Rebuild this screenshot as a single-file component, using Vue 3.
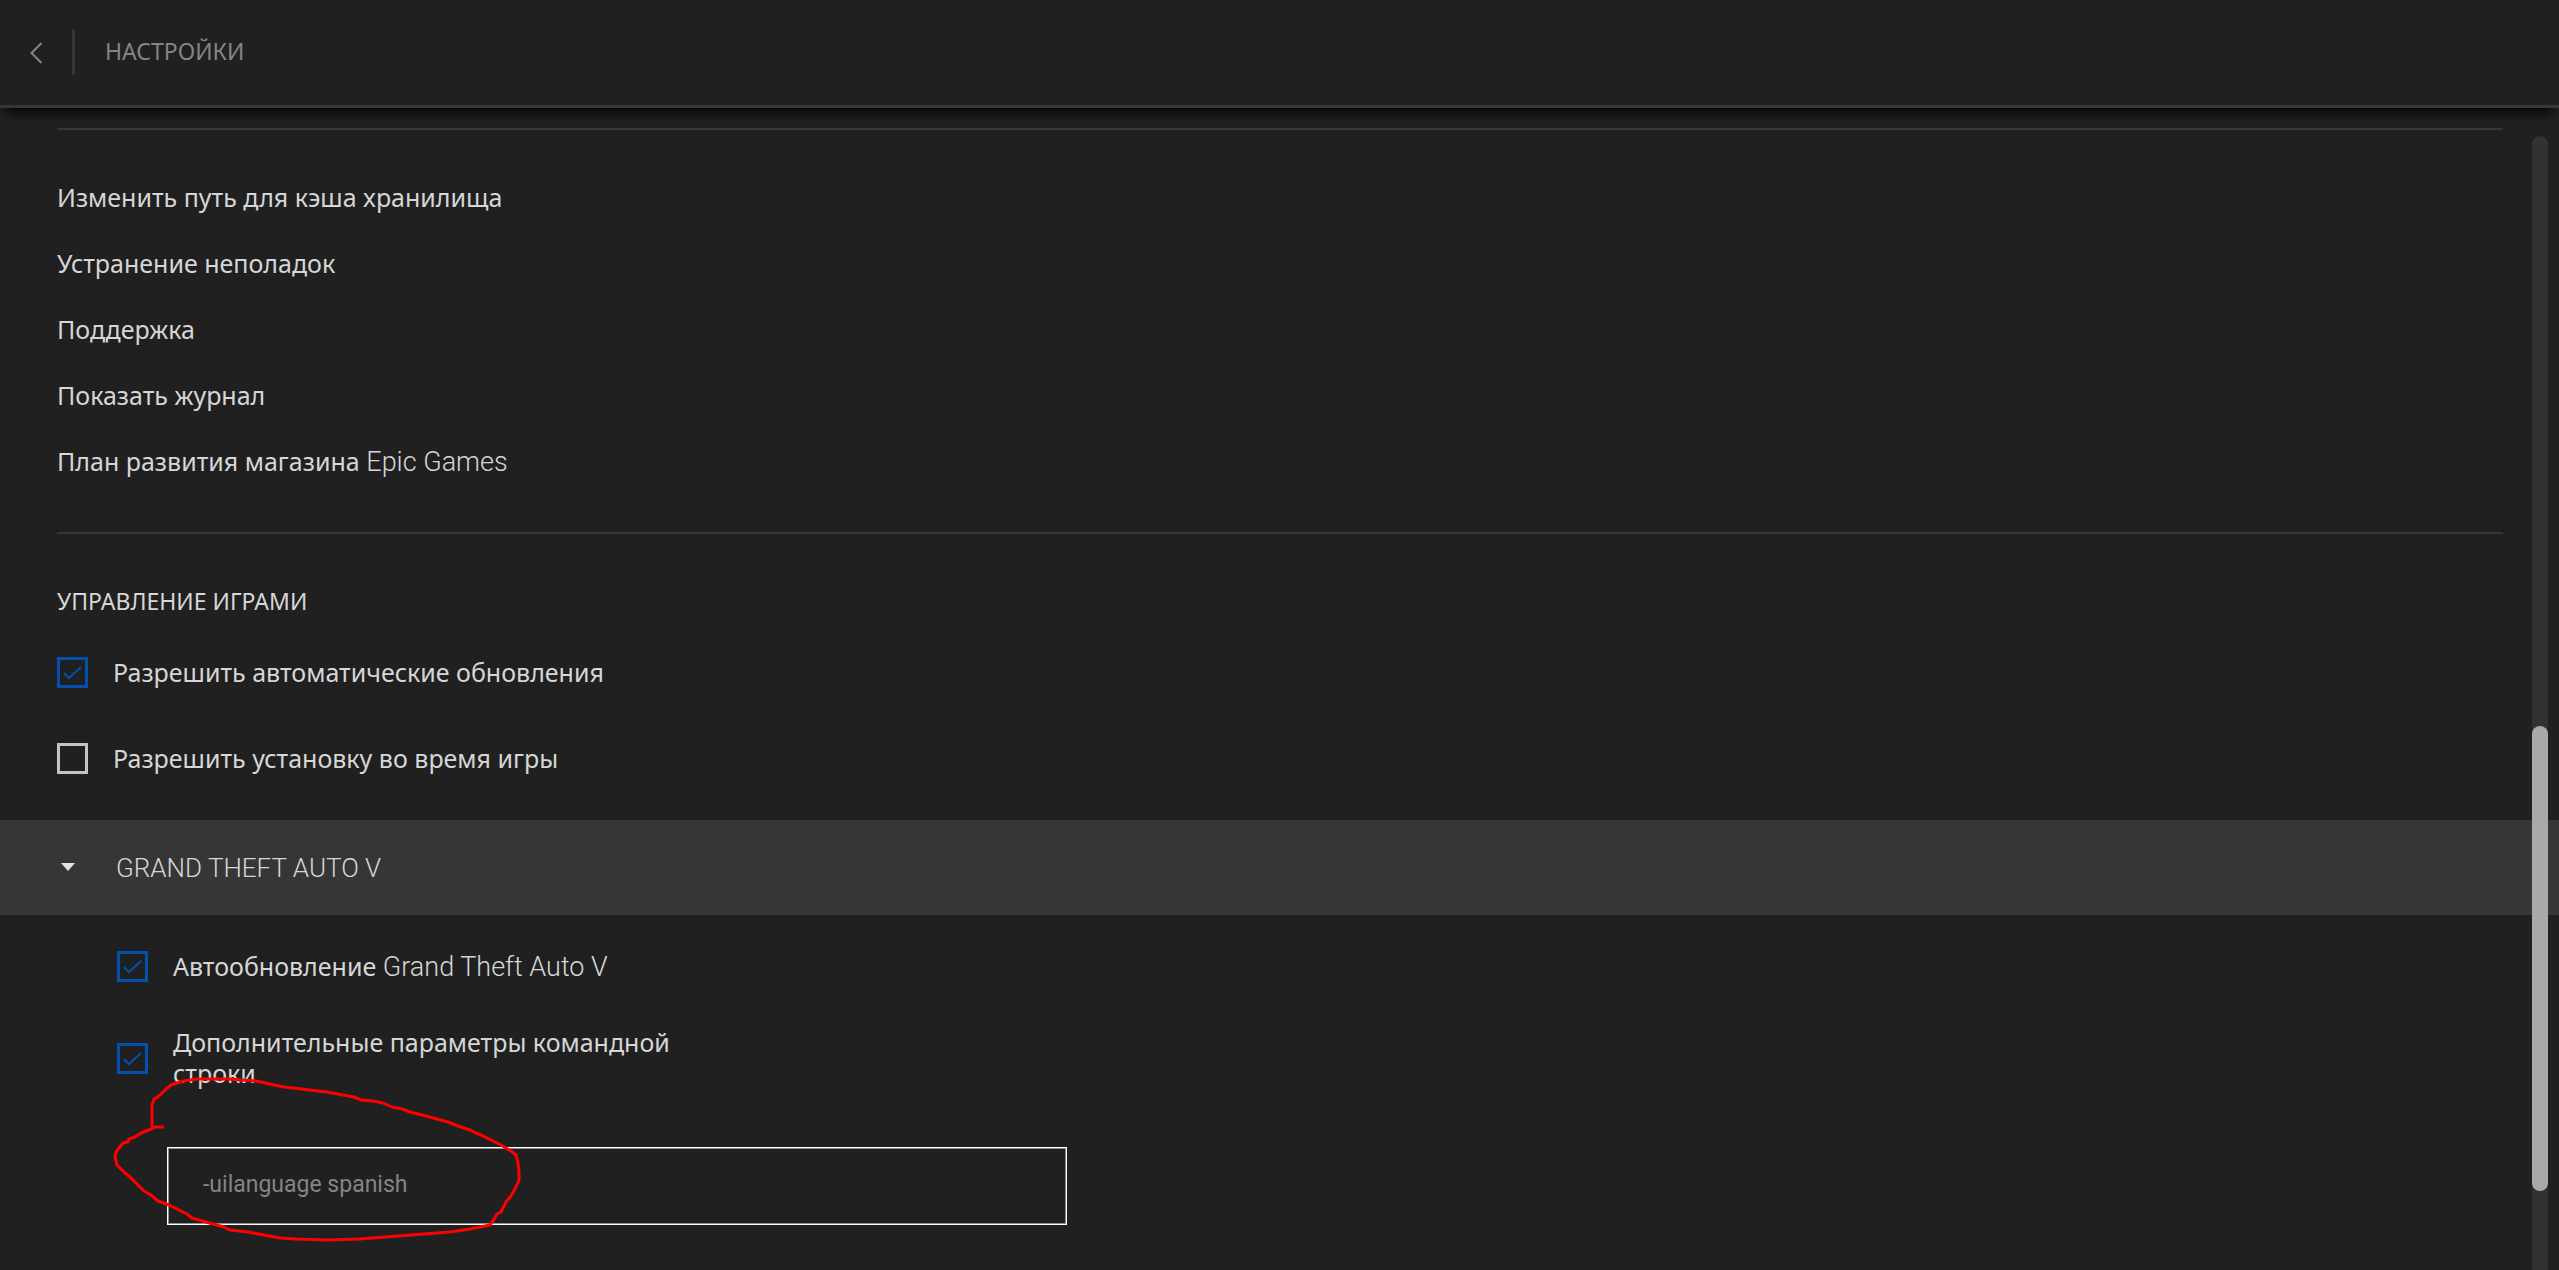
<script setup>
import { ref } from 'vue'

const links = [
  { text: 'Изменить путь для кэша хранилища' },
  { text: 'Устранение неполадок' },
  { text: 'Поддержка' },
  { text: 'Показать журнал' },
  { text: 'План развития магазина', latin: 'Epic Games' },
]

const general = ref([
  { id: 'auto-update', text: 'Разрешить автоматические обновления', checked: true },
  { id: 'play-install', text: 'Разрешить установку во время игры', checked: false },
])

const game = ref([
  { id: 'game-update', text: 'Автообновление', latin: 'Grand Theft Auto V', checked: true },
  { id: 'game-args', text: 'Дополнительные параметры командной строки', checked: true },
])

const args = ref('-uilanguage spanish')
</script>

<template>
  <div class="page">
    <header class="topbar">
      <button class="back" type="button" aria-label="Назад">
        <svg width="12" height="22" viewBox="0 0 12 22" fill="none" stroke="#858585" stroke-width="2">
          <path d="M11.500 1 1.500 11l10 10" />
        </svg>
      </button>
      <h1 class="title">НАСТРОЙКИ</h1>
    </header>

    <main class="content">
      <nav class="links">
        <a v-for="link in links" :key="link.text" href="#">{{ link.text }}<span v-if="link.latin" class="latin">&nbsp;{{ link.latin }}</span></a>
      </nav>

      <section class="manage">
        <h2 class="heading">УПРАВЛЕНИЕ ИГРАМИ</h2>
        <div v-for="item in general" :key="item.id" class="option">
          <span class="box">
            <input :id="item.id" v-model="item.checked" type="checkbox" />
            <svg v-if="item.checked" viewBox="0 0 31 31"><path d="M7 16l5 5L24 10" /></svg>
          </span>
          <label :for="item.id">{{ item.text }}</label>
        </div>
      </section>

      <button class="game-bar latin" type="button" aria-expanded="true">
        <svg width="16" height="9" viewBox="0 0 16 9"><path d="M1 0h14L8 8z" fill="#e2e2e2" /></svg>
        <span>GRAND THEFT AUTO V</span>
      </button>

      <section class="game">
        <div v-for="item in game" :key="item.id" class="option">
          <span class="box">
            <input :id="item.id" v-model="item.checked" type="checkbox" />
            <svg v-if="item.checked" viewBox="0 0 31 31"><path d="M7 16l5 5L24 10" /></svg>
          </span>
          <label :for="item.id">{{ item.text }}<span v-if="item.latin" class="latin">&nbsp;{{ item.latin }}</span></label>
        </div>
        <div class="field">
          <input v-model="args" class="args" type="text" aria-label="Параметры командной строки" />
          <svg class="scribble" width="440" height="250" viewBox="0 0 440 250" fill="none" stroke="#ff0000" stroke-width="3" stroke-linejoin="round" stroke-linecap="round">
            <path d="M73 127 65 127 61 129 51 133 45 137 39 139 38 142 33 143 26 152 25 157 27 165 34 172 40 177 49 186 54 191 61 195 68 201 79 205 87 209 97 214 102 218 123 224 134 227 140 230 158 232 190 238 206 239 237 240 269 239 308 236 360 232 380 229 400 225 403 221 407 214 411 212 416 202 421 196 426 187 429 180 429 172 428 163 426 155 421 151 411 145 405 142 399 139 391 135 386 133 380 130 368 126 358 122 336 116 320 112 312 109 302 107 293 103 283 101 271 100 264 97 237 92 219 90 212 89 194 87 166 81 138 79 107 79 93 81 81 85 76 89 69 96 64 99 62 105 62 115 62 129" />
          </svg>
        </div>
      </section>
    </main>

    <div class="track" aria-hidden="true"><div class="thumb"></div></div>
  </div>
</template>

<style>
body {
  background: #202020;
}
</style>

<style scoped>
.page {
  position: relative;
  min-height: 100vh;
  overflow: hidden;
  background: #202020;
  color: #d6d6d6;
  font: 400 25px/31px "Noto Sans", sans-serif;
}
.latin {
  font-family: Roboto, sans-serif;
  font-size: 27px;
  font-weight: 300;
  line-height: 1;
}
.topbar {
  display: flex;
  align-items: center;
  height: 105px;
  border-bottom: 3px solid #373737;
  box-shadow: 0 10px 12px -6px #000;
}
.back {
  display: flex;
  align-items: center;
  height: 45px;
  padding: 0 30px;
  border: 0;
  border-right: 3px solid #373737;
  background: none;
}
.title,
.heading {
  margin: 0;
  font-size: 23px;
  font-weight: 400;
}
.title {
  padding: 0 0 3px 30px;
  color: #858585;
}
.content {
  padding-top: 20px;
}
.links {
  display: flex;
  flex-direction: column;
  align-items: flex-start;
  gap: 35px;
  margin: 0 56px 0 57px;
  padding: 52px 0 55px;
  border: solid #373737;
  border-width: 2px 0;
}
.links a {
  color: inherit;
  text-decoration: none;
}
.manage {
  padding: 52px 57px 46px;
}
.heading {
  margin-bottom: 40px;
}
.option {
  display: flex;
  align-items: center;
  gap: 25px;
}
.option label {
  max-width: 520px;
}
.manage .option + .option {
  margin-top: 55px;
}
.box {
  display: grid;
  flex: none;
}
.box > * {
  grid-area: 1 / 1;
  width: 31px;
  height: 31px;
  margin: 0;
  box-sizing: border-box;
}
.box input {
  appearance: none;
  border: 3px solid #c4c4c4;
}
.box input:checked {
  border-color: #0350ad;
}
.box svg {
  fill: none;
  stroke: #0350ad;
  stroke-width: 2;
  pointer-events: none;
}
.game-bar {
  display: flex;
  align-items: center;
  gap: 40px;
  width: 100%;
  height: 95px;
  padding: 0 60px;
  border: 0;
  background: #363636;
  color: inherit;
  font-size: 26px;
}
.game {
  padding: 36px 117px 45px;
}
.game .option + .option {
  margin-top: 45px;
}
.field {
  position: relative;
  margin: 58px 0 0 50px;
}
.args {
  display: block;
  box-sizing: border-box;
  width: 900px;
  max-width: 100%;
  height: 78px;
  padding: 0 35px 3px;
  border: 1px solid #fff;
  box-shadow: inset 0 0 0 1px #8f8f8f;
  background: none;
  color: #858585;
  font: 400 23px Roboto, sans-serif;
}
.scribble {
  position: absolute;
  left: -77px;
  top: -147px;
  overflow: visible;
  pointer-events: none;
}
.track {
  position: absolute;
  top: 136px;
  right: 11px;
  bottom: 0;
  width: 16px;
  border-radius: 8px 8px 0 0;
  background: #323232;
}
.thumb {
  position: relative;
  top: 52%;
  height: 41%;
  border-radius: 8px;
  background: #a9a9a9;
}
</style>
